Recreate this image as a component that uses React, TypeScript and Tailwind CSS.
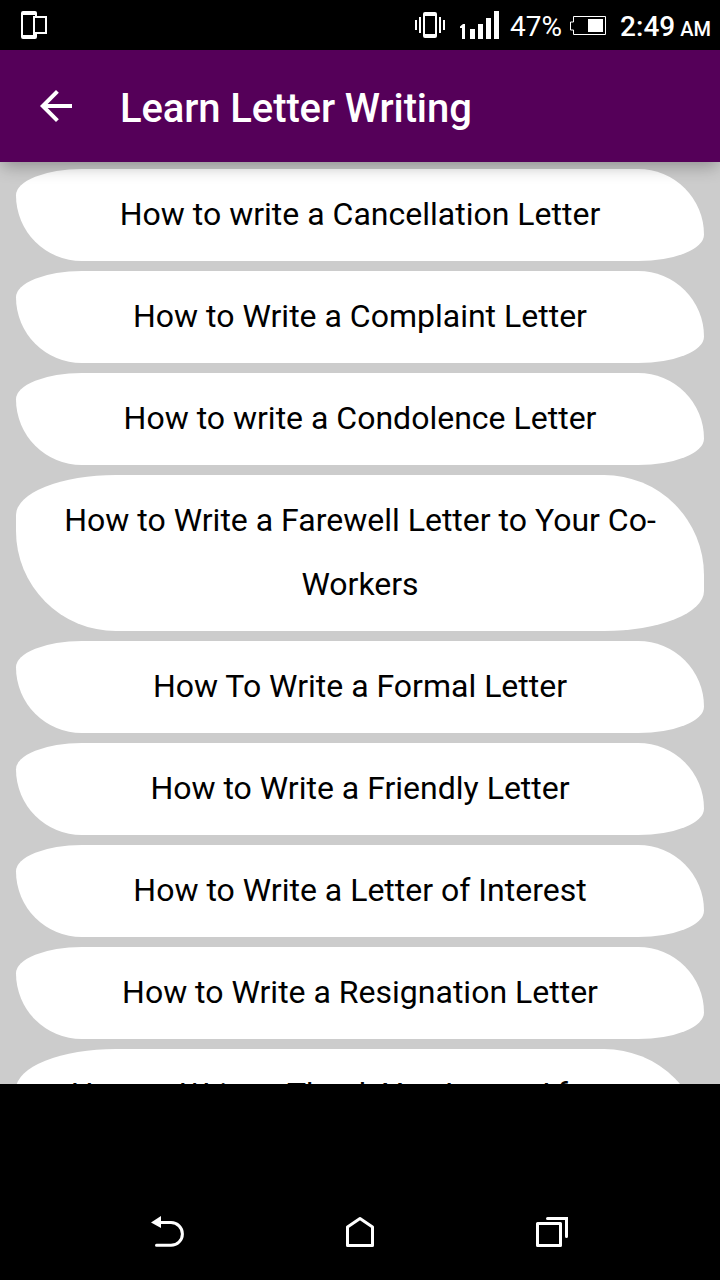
const LESSONS = [
  "How to write a Cancellation Letter",
  "How to Write a Complaint Letter",
  "How to write a Condolence Letter",
  "How to Write a Farewell Letter to Your Co-Workers",
  "How To Write a Formal Letter",
  "How to Write a Friendly Letter",
  "How to Write a Letter of Interest",
  "How to Write a Resignation Letter",
  "How to Write a Thank You Letter After an Interview",
];

function StatusBar() {
  return (
    <div className="flex h-[50px] shrink-0 items-center bg-black text-white">
      <svg className="ml-5" width="28" height="30" viewBox="0 0 28 30" fill="none">
        <path
          d="M3 1h12a2 2 0 0 1 2 2v3h10v18H17v3a2 2 0 0 1-2 2H3a2 2 0 0 1-2-2V3a2 2 0 0 1 2-2ZM3 5v20h10v-1H13V6h2V5ZM15 8v14h10V8Z"
          fill="white"
          fillRule="evenodd"
        />
      </svg>

      <div className="ml-auto flex items-center">
        {/* Vibrate */}
        <svg width="30" height="28" viewBox="0 0 30 28" fill="white">
          <path d="M10 1h10a2 2 0 0 1 2 2v22a2 2 0 0 1-2 2H10a2 2 0 0 1-2-2V3a2 2 0 0 1 2-2ZM10 5v18h10V5Z" fillRule="evenodd" />
          <path d="M0 9h2v10H0ZM4 6h2v16H4ZM24 6h2v16h-2ZM28 9h2v10h-2Z" />
        </svg>

        {/* Signal */}
        <svg className="ml-[15px]" width="39" height="28" viewBox="0 0 39 28" fill="white">
          <path d="M0 15.5 3 13h2v15H2V17H0ZM10 18h5v10h-5ZM18 13h5v15h-5ZM26 7h5v21h-5ZM34 0h5v28h-5Z" />
        </svg>

        <span className="mt-1 ml-[11px] w-[60px] text-[28px] leading-none">47%</span>

        {/* Battery */}
        <svg className="mt-0.5" width="36" height="20" viewBox="0 0 36 20">
          <path d="M3.5.5h32v18h-32v-4.500h-3v-8h3Z" fill="none" stroke="white" />
          <path d="M18 3h15v13H18Z" fill="white" />
        </svg>

        <span className="mt-1 ml-3.5 text-[28px] leading-none font-medium">2:49</span>
        <span className="mt-2 mr-[9px] ml-[5px] text-[20px] leading-none font-medium">AM</span>
      </div>
    </div>
  );
}

function Toolbar() {
  return (
    <header className="relative z-10 flex h-28 shrink-0 items-center bg-[#550059] text-white shadow-[0_6px_16px_-2px_rgba(0,0,0,0.3)]">
      <button className="ml-10" aria-label="Back">
        <svg width="32" height="32" viewBox="0 0 32 32" fill="white">
          <path d="M32 14H7.660L18.840 2.820 16 0 0 16l16 16 2.820-2.820L7.660 18H32Z" />
        </svg>
      </button>
      <h1 className="mt-1.5 ml-12 text-[40px] leading-none font-medium tracking-[-0.1px]">Learn Letter Writing</h1>
    </header>
  );
}

function LessonButton({ title }: { title: string }) {
  return (
    <button className="w-full rounded-[100px/40px_100px] bg-white px-8 pt-[13px] pb-[15px] text-center text-[32px] leading-[64px] text-black">
      {title}
    </button>
  );
}

function NavBar() {
  return (
    <nav className="flex flex-1 items-end justify-between bg-black px-[150px] pb-8">
      <svg width="34" height="32" viewBox="0 0 34 32" fill="none">
        <path d="M9 6.500h12a11.400 11.400 0 0 1 0 22.800H6.500" stroke="white" strokeWidth="3" strokeLinecap="round" />
        <path d="M1 6.500 11 0v12Z" fill="white" />
      </svg>
      <svg width="28" height="32" viewBox="0 0 28 32" fill="none">
        <path d="M1.500 11 14 2.500 26.500 11v18.500h-25Z" stroke="white" strokeWidth="3" strokeLinejoin="round" />
      </svg>
      <svg width="34" height="32" viewBox="0 0 34 32" fill="none" stroke="white" strokeWidth="3">
        <path d="M1.500 7.500h23v22h-23Z" strokeLinejoin="round" />
        <path d="M11.500 2.500h19v18" strokeLinecap="round" />
      </svg>
    </nav>
  );
}

export default function App() {
  return (
    <div className="flex h-[1280px] w-[720px] flex-col overflow-hidden bg-black font-[Roboto,sans-serif]">
      <StatusBar />
      <Toolbar />
      <main className="flex h-[922px] shrink-0 flex-col gap-2.5 overflow-hidden bg-[#cccccc] px-4 pt-[7px]">
        {LESSONS.map((title) => (
          <LessonButton key={title} title={title} />
        ))}
      </main>
      <NavBar />
    </div>
  );
}
